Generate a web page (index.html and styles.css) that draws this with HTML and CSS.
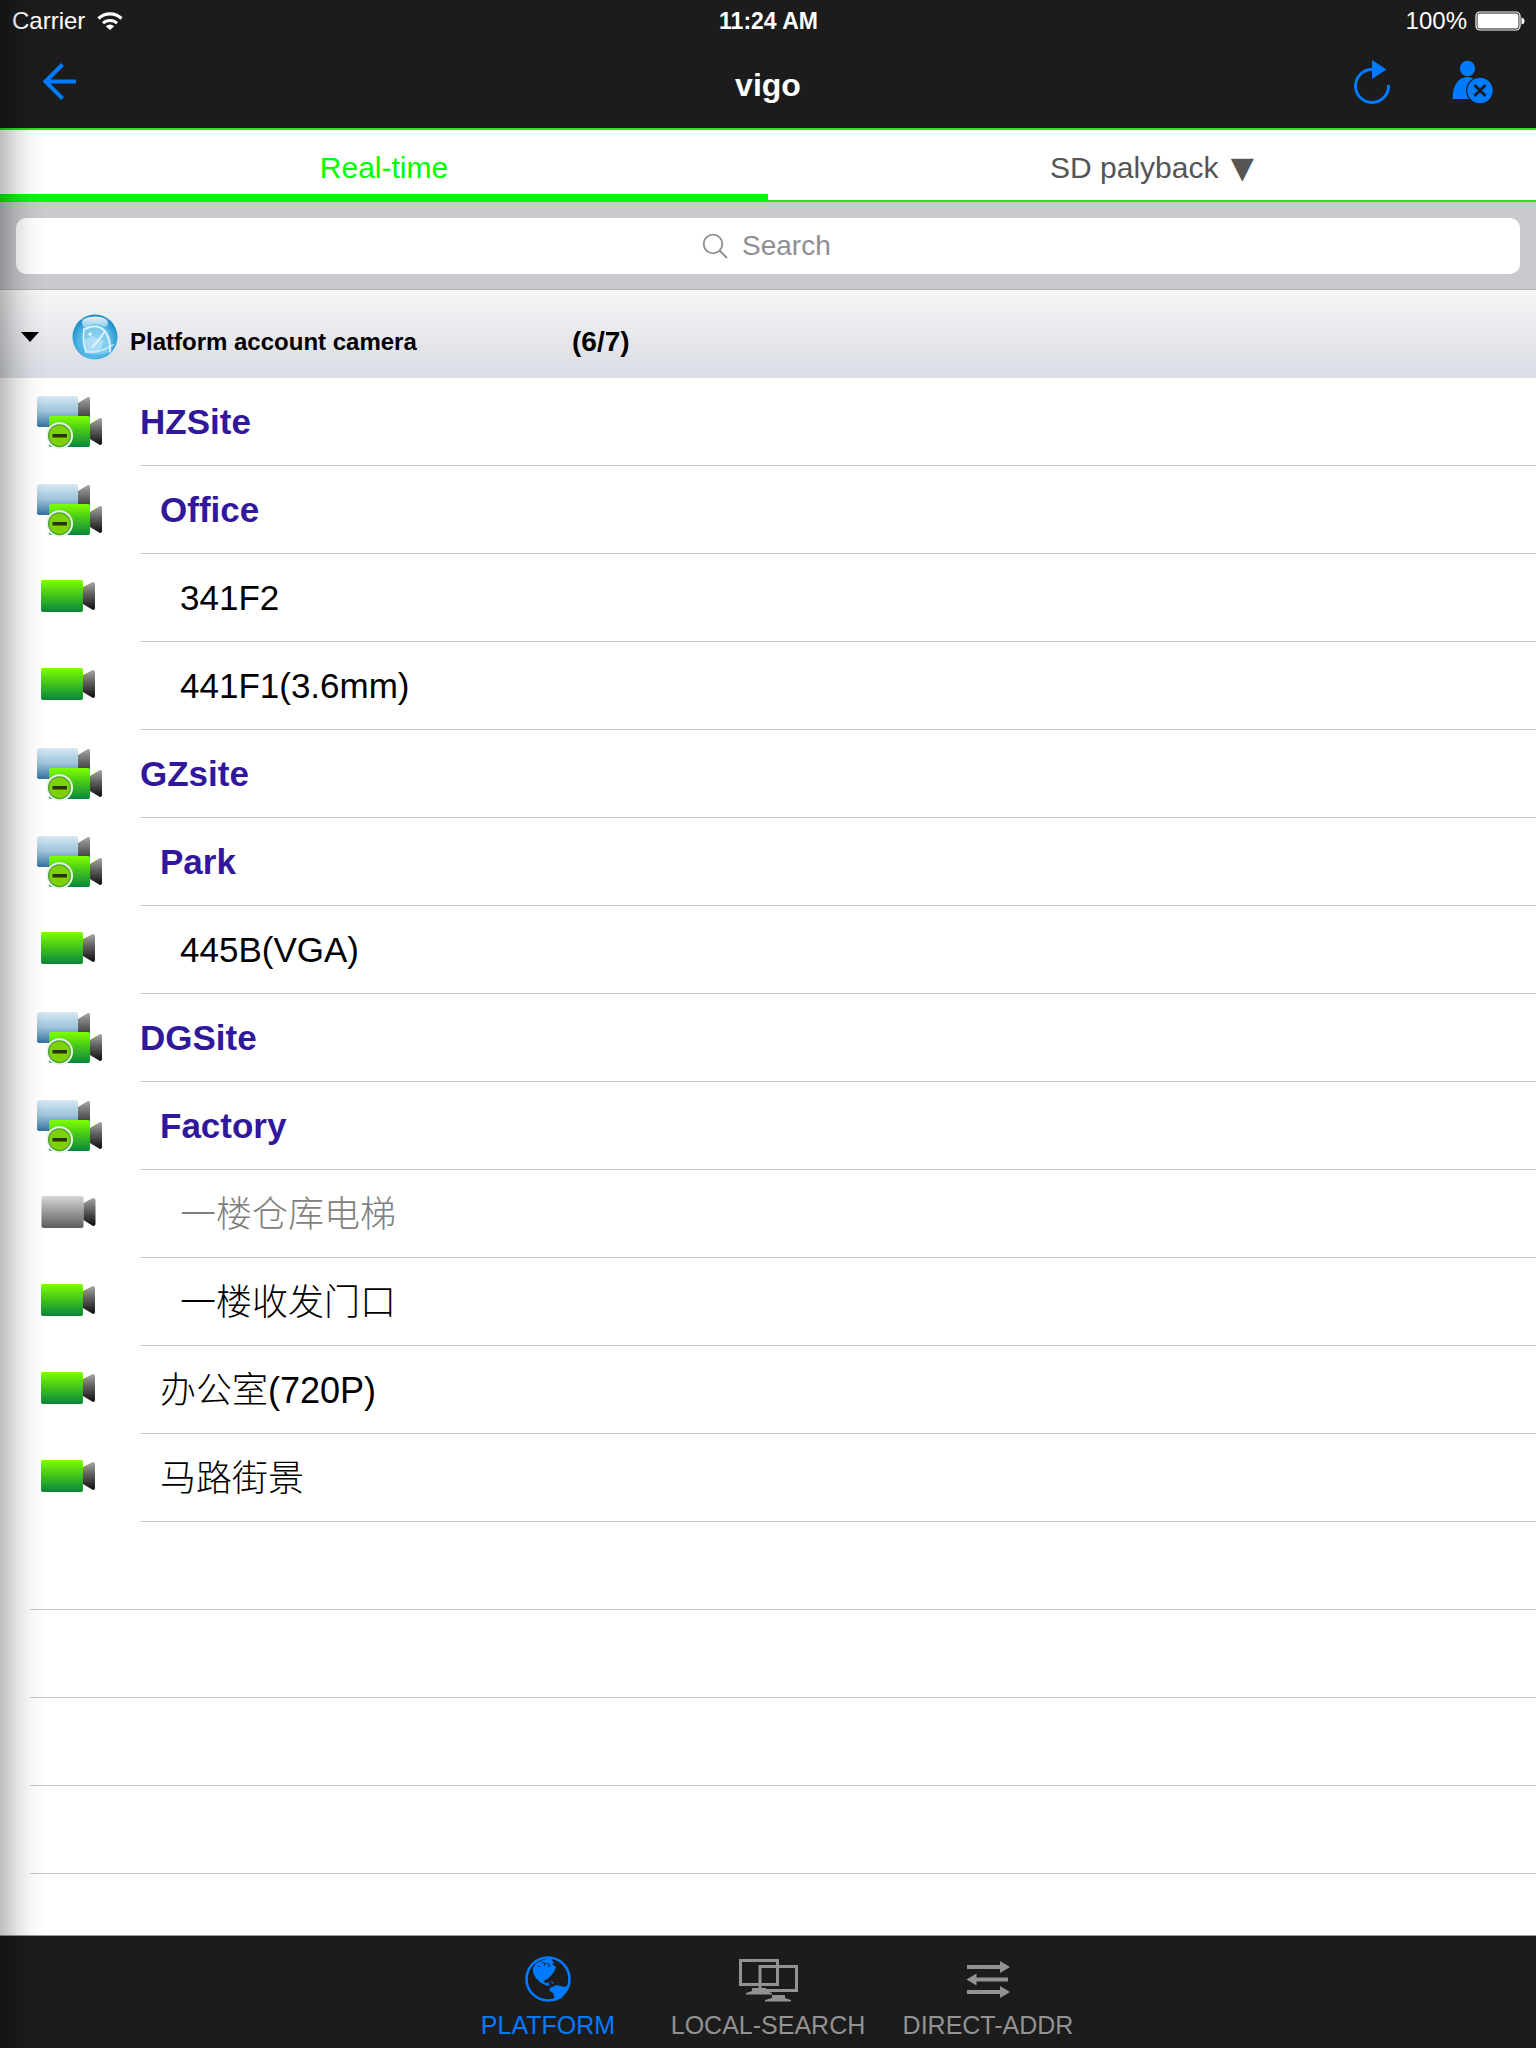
FILE: index.html
```html
<!DOCTYPE html>
<html lang="en">
<head>
<meta charset="UTF-8" />
<meta name="viewport" content="width=device-width, initial-scale=1" />
<title>vigo</title>
<link rel="stylesheet" href="styles.css">
</head>
<body>

<!-- shared icons -->
<svg class="defs" aria-hidden="true">
  <defs>
    <linearGradient id="green" x1="0" y1="0" x2="0" y2="1">
      <stop offset="0" stop-color="#7dff00" />
      <stop offset="1" stop-color="#07863a" />
    </linearGradient>
    <linearGradient id="gray" x1="0" y1="0" x2="0" y2="1">
      <stop offset="0" stop-color="#d6d6d6" />
      <stop offset="1" stop-color="#5c5c5c" />
    </linearGradient>
    <linearGradient id="blue" x1="0" y1="0" x2="0" y2="1">
      <stop offset="0" stop-color="#d8e9f3" />
      <stop offset="0.5" stop-color="#9cc3da" />
      <stop offset="1" stop-color="#35709f" />
    </linearGradient>
    <linearGradient id="lens" x1="0" y1="0" x2="0" y2="1">
      <stop offset="0" stop-color="#a5a5a5" />
      <stop offset="1" stop-color="#0c0a0b" />
    </linearGradient>
    <linearGradient id="shine" x1="0" y1="0" x2="0" y2="1">
      <stop offset="0" stop-color="#fff" stop-opacity="0.9" />
      <stop offset="1" stop-color="#fff" stop-opacity="0.35" />
    </linearGradient>
    <radialGradient id="ball" cx="0.5" cy="0.6" r="0.58">
      <stop offset="0" stop-color="#7accf0" />
      <stop offset="0.65" stop-color="#4db5e6" />
      <stop offset="1" stop-color="#1787bf" />
    </radialGradient>
  </defs>
  <symbol id="site" viewBox="0 0 68 56">
    <rect x="1" y="2" width="41" height="31" rx="2" fill="url(#blue)" />
    <path d="M42 9L52 3Q54 3 54 5V34H42Z" fill="url(#lens)" />
    <rect x="13" y="22" width="41" height="31" rx="2" fill="url(#green)" />
    <path d="M54 30L64 24Q66 24 66 26V49Q66 51 64 51L54 45Z" fill="url(#lens)" />
    <circle cx="23.5" cy="41.7" r="13.5" fill="#eef2ee" />
    <circle cx="23.5" cy="41.7" r="11.5" fill="#3d9a2e" />
    <circle cx="23.5" cy="41.7" r="10.5" fill="#7fd00c" />
    <rect x="16.5" y="40" width="14.500" height="3.500" fill="#2b3310" />
  </symbol>
  <symbol id="camera" viewBox="0 0 68 56">
    <rect x="5" y="10" width="42" height="32" rx="2" fill="url(#green)" />
    <path d="M47 17L57 12Q59 12 59 14V38Q59 40 57 40L47 34Z" fill="url(#lens)" />
  </symbol>
  <symbol id="camera-off" viewBox="0 0 68 56">
    <rect x="5.500" y="10" width="42" height="32" rx="2" fill="url(#gray)" />
    <path d="M47.500 17L57 12Q59.500 12 59.500 14V38Q59.500 40 57 40L47.500 34Z" fill="url(#lens)" />
  </symbol>
</svg>

<div class="app">
  <header class="top">
    <div class="status">
      <div class="status-side">
        <span>Carrier</span>
        <svg width="26" height="20" viewBox="0 0 26 20" aria-hidden="true">
          <path d="M1.500 7.500A16.500 16.500 0 0 1 24.500 7.500" fill="none" stroke="#fff" stroke-width="3.200" />
          <path d="M6 12.300A10 10 0 0 1 20 12.300" fill="none" stroke="#fff" stroke-width="3" />
          <path d="M13 19L8.800 15.200Q13 11.800 17.200 15.200Z" fill="#fff" />
        </svg>
      </div>
      <div class="clock">11:24 AM</div>
      <div class="status-side status-right">
        <span>100%</span>
        <svg width="50" height="20" viewBox="0 0 50 20" aria-hidden="true">
          <rect x="1" y="1" width="44" height="18" rx="4" fill="none" stroke="#fff" stroke-width="1.200" />
          <rect x="2.500" y="2.500" width="41" height="15" rx="2" fill="#fff" />
          <path d="M46.500 6.500Q49.500 7 49.500 10T46.500 13.500Z" fill="#fff" />
        </svg>
      </div>
    </div>
    <nav class="nav">
      <button class="icon-btn" aria-label="Back">
        <svg width="36" height="44" viewBox="0 0 36 44" fill="none" stroke="#007aff" stroke-width="4">
          <path d="M34 19.500H4M20.500 2.500L3.500 19.500L20.500 36.500" />
        </svg>
      </button>
      <h1>vigo</h1>
      <div class="nav-actions">
        <button class="icon-btn" aria-label="Refresh">
          <svg width="40" height="48" viewBox="0 0 40 48">
            <path d="M36.500 25A16.500 16.500 0 1 1 20 9.500" fill="none" stroke="#007aff" stroke-width="3" />
            <path d="M20 0L34.500 9.500L20 19Z" fill="#007aff" />
          </svg>
        </button>
        <button class="icon-btn" aria-label="Log out">
          <svg width="44" height="48" viewBox="0 0 44 48">
            <circle cx="17.500" cy="8.500" r="7.700" fill="#007aff" />
            <path d="M2.500 39C2.500 26 8 17 17.500 17S32 26 32 39Z" fill="#007aff" />
            <circle cx="30" cy="30.500" r="13.300" fill="#007aff" stroke="#1c1c1c" stroke-width="1.200" />
            <path d="M24.500 25L35.500 36M35.500 25L24.500 36" stroke="#1c1c1c" stroke-width="2.800" />
          </svg>
        </button>
      </div>
    </nav>
  </header>

  <div class="tabs">
    <button class="tab active">Real-time</button>
    <button class="tab">SD palyback <span class="arrow">▼</span></button>
  </div>

  <div class="search">
    <label class="search-box">
      <svg width="26" height="26" viewBox="0 0 26 26" fill="none" stroke="#8e8e93" stroke-width="1.800" aria-hidden="true">
        <circle cx="11" cy="11" r="9.300" />
        <path d="M17.500 17.500L25 25" />
      </svg>
      <input type="text" placeholder="Search" aria-label="Search">
    </label>
  </div>

  <button class="section">
    <svg class="caret" width="18" height="10" viewBox="0 0 18 10" aria-hidden="true">
      <path d="M0 0H18L9 10Z" />
    </svg>
    <svg class="globe" width="46" height="46" viewBox="0 0 46 46" aria-hidden="true">
      <circle cx="23" cy="23" r="22.500" fill="url(#ball)" />
      <path d="M11 14Q23 9 34 15Q42 26 38 38Q27 43 14 38Q10 26 11 14Z" fill="#d3f0fb" opacity="0.3" />
      <path d="M12 26L20 22L32 27L28 37L14 38Z" fill="#e8f8ff" opacity="0.35" />
      <path d="M10 8Q10 3 23 2.500Q36 3 36 9Q36 13 32 13Q23 7 14 14Q10 13 10 8Z" fill="url(#shine)" />
      <g fill="none" stroke="#f2fcff" stroke-linecap="round" opacity="0.85">
        <path d="M13 15Q27 8 34 19Q39 28 38 38" stroke-width="1.800" />
        <path d="M12 15Q10 28 14 38" stroke-width="1.600" />
        <path d="M33 17Q26 28 20 33" stroke-width="1.600" />
        <path d="M14 38Q26 40 41 31" stroke-width="2" opacity="0.7" />
      </g>
      <circle cx="18" cy="20" r="1.500" fill="#fff" />
    </svg>
    <span class="section-name">Platform account camera</span>
    <span class="section-count">(6/7)</span>
  </button>

  <ul class="list">
    <li class="row site"><svg class="row-icon"><use href="#site" /></svg><button class="label">HZSite</button></li>
    <li class="row site"><svg class="row-icon"><use href="#site" /></svg><button class="label level-1">Office</button></li>
    <li class="row"><svg class="row-icon"><use href="#camera" /></svg><button class="label level-2">341F2</button></li>
    <li class="row"><svg class="row-icon"><use href="#camera" /></svg><button class="label level-2">441F1(3.6mm)</button></li>
    <li class="row site"><svg class="row-icon"><use href="#site" /></svg><button class="label">GZsite</button></li>
    <li class="row site"><svg class="row-icon"><use href="#site" /></svg><button class="label level-1">Park</button></li>
    <li class="row"><svg class="row-icon"><use href="#camera" /></svg><button class="label level-2">445B(VGA)</button></li>
    <li class="row site"><svg class="row-icon"><use href="#site" /></svg><button class="label">DGSite</button></li>
    <li class="row site"><svg class="row-icon"><use href="#site" /></svg><button class="label level-1">Factory</button></li>
    <li class="row offline"><svg class="row-icon"><use href="#camera-off" /></svg><button class="label level-2" lang="zh">一楼仓库电梯</button></li>
    <li class="row"><svg class="row-icon"><use href="#camera" /></svg><button class="label level-2" lang="zh">一楼收发门口</button></li>
    <li class="row"><svg class="row-icon"><use href="#camera" /></svg><button class="label level-1" lang="zh">办公室(720P)</button></li>
    <li class="row"><svg class="row-icon"><use href="#camera" /></svg><button class="label level-1" lang="zh">马路街景</button></li>
    <li class="empty"></li>
    <li class="empty"></li>
    <li class="empty"></li>
    <li class="empty"></li>
  </ul>

  <nav class="tabbar">
    <button class="tabbar-item active">
      <svg width="60" height="48" viewBox="0 0 60 48" aria-hidden="true">
        <circle cx="30" cy="24" r="21.500" fill="none" stroke="currentColor" stroke-width="2.600" />
        <path fill="currentColor" d="M14.700 13.300L18.700 7.700L24.700 5L32.700 3L36 8L34 9L38 11.700L36.700 15.700L33.700 20L30.300 23.300L26 25.700L27 28.300L30.300 27.300L32 30.500L28.700 30.700L22.700 27.700L18 23.300L15.300 18.300Z" />
        <path fill="currentColor" d="M32 33L38.700 30L45.300 31.700L50.500 31L44 43L37 46L35.300 38.300L31.300 35.700ZM31.500 26L36 27.500L35.500 29Z" />
        <path d="M24 7L27.500 8.500L26 11M29 8L32 10.500L30 12M20 11L22 12" fill="none" stroke="#1c1c1c" stroke-width="1" />
      </svg>
      <span>PLATFORM</span>
    </button>
    <button class="tabbar-item">
      <svg width="60" height="48" viewBox="0 0 60 48" aria-hidden="true">
        <path d="M2.500 5.500H39.500V29.500H2.500ZM22 11.500H58.500V35.500H22Z" fill="none" stroke="currentColor" stroke-width="3" />
        <path fill="currentColor" d="M14 33H28V36L34 38V39.500H8V38L14 36ZM34 40H47V43L53 45V46.500H27V45L34 43Z" />
      </svg>
      <span>LOCAL-SEARCH</span>
    </button>
    <button class="tabbar-item">
      <svg width="60" height="48" viewBox="0 0 60 48" fill="currentColor" aria-hidden="true">
        <path d="M9 10H42V6L52 12L42 18V14H9Z" />
        <path d="M50 22.500H18.500V18.500L8.500 24.500L18.500 30.500V26.500H50Z" />
        <path d="M9 35H42V31L52 37L42 43V39H9Z" />
      </svg>
      <span>DIRECT-ADDR</span>
    </button>
  </nav>
</div>

</body>
</html>
```
FILE: styles.css
```css
* {
  box-sizing: border-box;
}
body {
  margin: 0;
  background: #fff;
  font-family: "Liberation Sans", "Noto Sans CJK SC", Arial, sans-serif;
  color: #000;
}
button {
  background: none;
  border: none;
  padding: 0;
  margin: 0;
  font: inherit;
  color: inherit;
  cursor: pointer;
}
svg {
  display: block;
  flex-shrink: 0;
}
.defs {
  position: absolute;
  width: 0;
  height: 0;
}
.app {
  min-height: 100vh;
  display: flex;
  flex-direction: column;
}
/* shadow cast along the left edge */
.app::after {
  content: "";
  position: fixed;
  left: 0;
  top: 0;
  bottom: 0;
  width: 44px;
  background: linear-gradient(to right, rgba(0,0,0,0.26), rgba(0,0,0,0.12) 35%, rgba(0,0,0,0.03) 70%, transparent);
  pointer-events: none;
}

.top {
  background: #1c1c1c;
  color: #fff;
  border-bottom: 2px solid #2be02b;
}
.status {
  display: grid;
  grid-template-columns: 1fr auto 1fr;
  align-items: center;
  height: 40px;
  padding: 2px 11px 0 12px;
  font-size: 24px;
}
.status-side {
  display: flex;
  align-items: center;
  gap: 12px;
}
.status-right {
  justify-content: flex-end;
  gap: 8px;
}
.clock {
  font-size: 23px;
  font-weight: bold;
}
.nav {
  display: grid;
  grid-template-columns: 1fr auto 1fr;
  align-items: center;
  height: 88px;
  padding: 0 42px;
}
.nav h1 {
  margin: 0;
  padding-top: 2px;
  font-size: 32px;
}
.icon-btn {
  justify-self: start;
}
.nav-actions {
  display: flex;
  justify-content: flex-end;
  gap: 58px;
}

.tabs {
  display: flex;
  height: 72px;
}
.tab {
  flex: 1;
  border-bottom: 2px solid #2be02b;
  padding-top: 6px;
  font-size: 30px;
  color: #555;
}
.tab.active {
  border-bottom: 8px solid #0f0;
  padding-top: 12px;
  color: #0f0;
}
.arrow {
  margin-left: 4px;
  font-family: "DejaVu Sans", sans-serif;
  line-height: 1;
}

.search {
  background: #c9c9ce;
  border-bottom: 1px solid #b2b2b6;
  padding: 16px 16px 15px;
}
.search-box {
  display: flex;
  align-items: center;
  justify-content: center;
  gap: 14px;
  height: 56px;
  background: #fff;
  border-radius: 10px;
}
.search-box input {
  width: 92px;
  border: none;
  outline: none;
  padding: 0;
  background: none;
  font: inherit;
  font-size: 28px;
}
.search-box input::placeholder {
  color: #8e8e93;
  opacity: 1;
}

.section {
  display: flex;
  align-items: center;
  height: 88px;
  padding: 6px 21px 0;
  background: linear-gradient(#f5f5f6, #d9dce3);
  text-align: left;
  font-size: 24px;
  font-weight: bold;
}
.globe {
  margin: 0 12px 0 33px;
}
.section-name {
  width: 442px;
  padding-top: 10px;
}
.section-count {
  padding-top: 10px;
  font-size: 28px;
}

.list {
  flex: 1;
  margin: 0;
  padding: 0;
  list-style: none;
}
.row {
  display: flex;
  align-items: center;
  height: 88px;
  padding-left: 36px;
}
.row-icon {
  width: 68px;
  height: 56px;
  margin-right: 36px;
}
.label {
  flex: 1;
  align-self: stretch;
  border-bottom: 1px solid #c8c7cc;
  text-align: left;
  font-size: 35px;
}
.label:lang(zh) {
  padding-bottom: 6px;
  font-size: 36px;
  font-weight: 300;
}
.level-1 {
  padding-left: 20px;
}
.level-2 {
  padding-left: 40px;
}
.site .label {
  font-weight: bold;
  color: #31179b;
}
.offline .label {
  color: #808080;
}
.empty {
  height: 88px;
  margin-left: 30px;
  border-bottom: 1px solid #c8c7cc;
}

.tabbar {
  display: flex;
  justify-content: center;
  height: 113px;
  padding-top: 19px;
  background: #1c1c1c;
  border-top: 1px solid #999;
  color: #929292;
}
.tabbar-item {
  display: flex;
  flex-direction: column;
  align-items: center;
  gap: 8px;
  width: 220px;
  font-size: 25px;
  line-height: 28px;
}
.tabbar-item.active {
  color: #007aff;
}
```
